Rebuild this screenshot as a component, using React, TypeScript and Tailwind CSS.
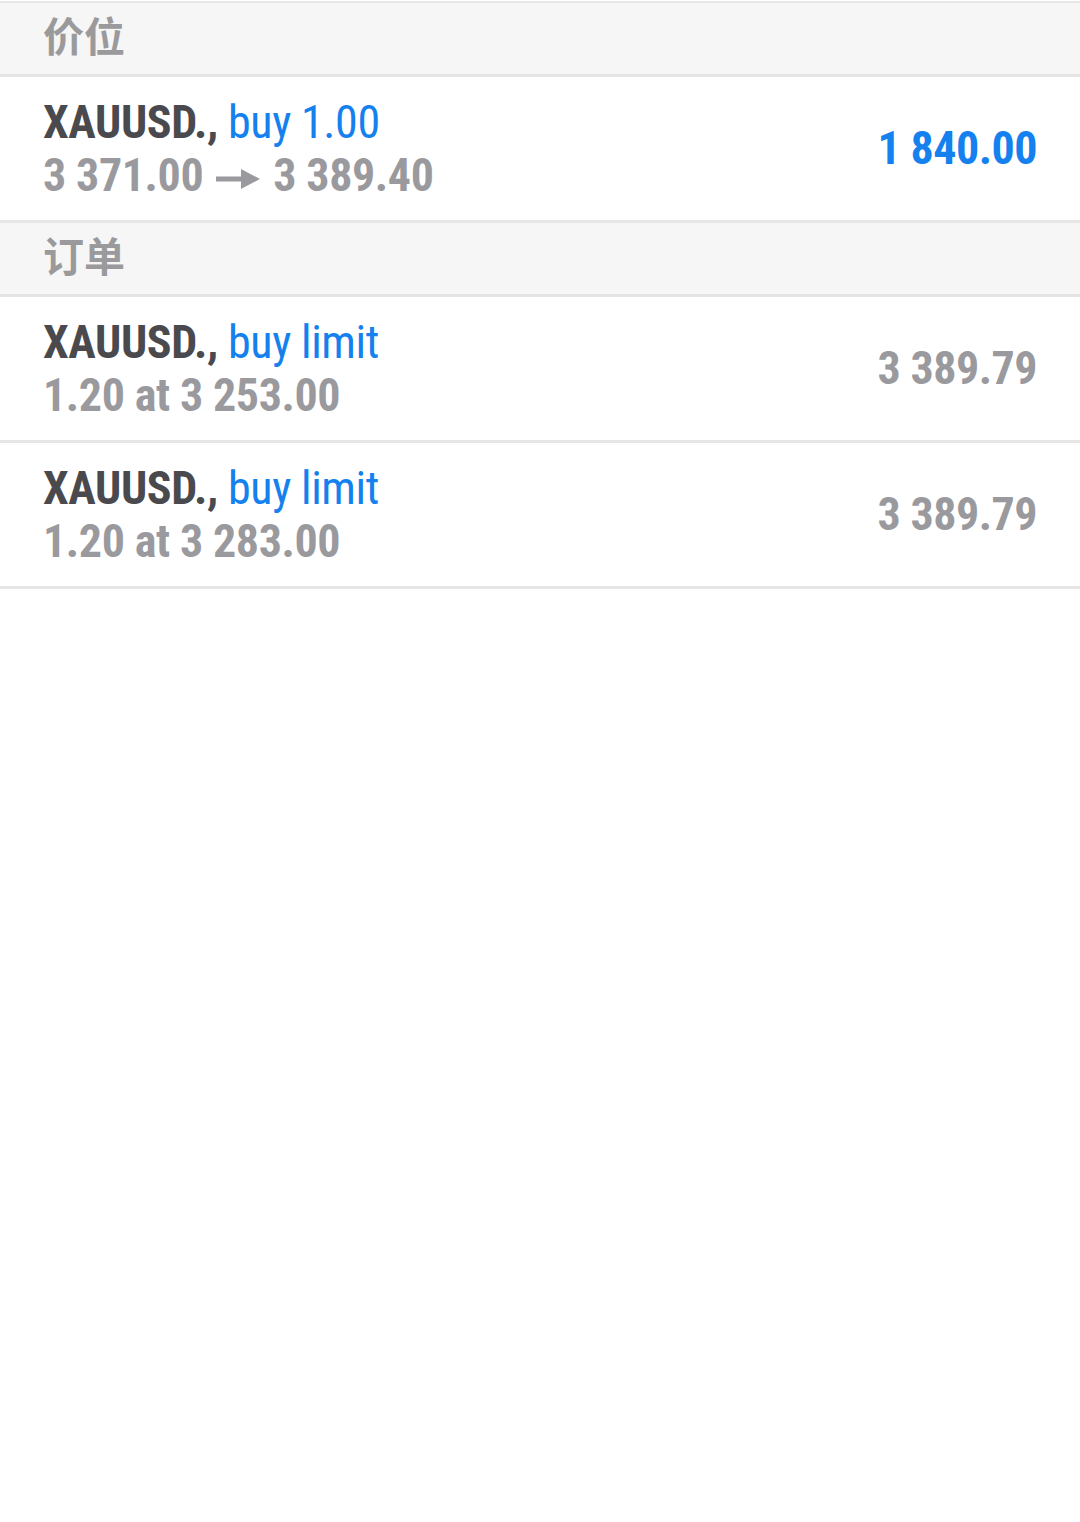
import React from 'react';

const font = "font-['Roboto','Noto_Sans_CJK_SC',sans-serif] font-stretch-condensed";

const Arrow = () => (
  <svg width="44" height="22" viewBox="0 0 44 22" className="inline-block mx-[13px] align-[1px]">
    <rect x="0" y="8.5" width="30" height="5" fill="#9a9a9e" />
    <path d="M25 1 L44 11 L25 21 Z" fill="#9a9a9e" />
  </svg>
);

const SectionHeader = ({ title }: { title: string }) => (
  <div className="h-[74px] bg-[#f6f6f6] border-b-[3px] border-[#e4e4e4] flex items-center pl-[43px]">
    <span className="text-[41px] font-bold text-[#9a9a9c] font-['Noto_Sans_CJK_SC',sans-serif] -mt-[7px]">{title}</span>
  </div>
);

type RowProps = {
  action: string;
  detail: React.ReactNode;
  value: string;
  valueBlue?: boolean;
};

const Row = ({ action, detail, value, valueBlue }: RowProps) => (
  <div className="h-[146px] bg-white border-b-[3px] border-[#e6e6e6] flex items-center justify-between pl-[43px] pr-[43px]">
    <div className="text-[46px] leading-[53px] tracking-[-0.4px]">
      <div>
        <span className="font-bold text-[#4a4a4e]">XAUUSD.,</span>{' '}
        <span className="text-[#1581ee]">{action}</span>
      </div>
      <div className="font-bold text-[#9a9a9e]">{detail}</div>
    </div>
    <div className={`text-[46px] tracking-[-0.5px] font-bold ${valueBlue ? 'text-[#1581ee]' : 'text-[#9a9a9e]'}`}>{value}</div>
  </div>
);

const App = () => {
  return (
    <div className={`w-[1080px] min-h-[1522px] bg-white pt-px ${font}`}>
      <div className="border-t-2 border-[#e6e6e6]">
        <SectionHeader title="价位" />
        <Row
          action="buy 1.00"
          detail={
            <>
              3 371.00<Arrow />3 389.40
            </>
          }
          value="1 840.00"
          valueBlue
        />
        <SectionHeader title="订单" />
        <Row action="buy limit" detail="1.20 at 3 253.00" value="3 389.79" />
        <Row action="buy limit" detail="1.20 at 3 283.00" value="3 389.79" />
      </div>
    </div>
  );
};

export default App;
